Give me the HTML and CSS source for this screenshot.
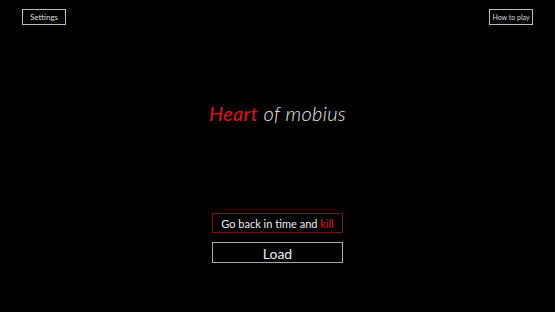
FILE: index.html
```html
<html>
<head>
  <link rel="stylesheet" href="styles.css">
</head>
<body>

<div class="screen">
  <div class="top-bar">
    <button class="small-btn">Settings</button>
    <button class="small-btn small-btn-help">How to play</button>
  </div>

  <h1 class="title"><span class="title-red">Heart</span> of mobius</h1>

  <div class="menu">
    <button class="menu-btn menu-btn-start">Go back in time and <span class="kill">kill</span></button>
    <button class="menu-btn menu-btn-load">Load</button>
  </div>
</div>

</body>
</html>
```

FILE: styles.css
```css
body {
  margin: 0;
  background-color: #000;
  font-family: "Lato", "Noto Sans", sans-serif;
  color: #eee;
}

.screen {
  width: 555px;
  height: 312px;
  display: flex;
  flex-direction: column;
  align-items: center;
}

.top-bar {
  width: 100%;
  box-sizing: border-box;
  display: flex;
  justify-content: space-between;
  padding: 9px 22px 0 22px;
}

.small-btn {
  width: 44px;
  height: 16px;
  padding: 0;
  background: #000;
  color: #ddd;
  border: 1px solid #bbb;
  font-family: "Lato", "Noto Sans", sans-serif;
  font-size: 8px;
  line-height: 14px;
}

.small-btn-help {
  font-size: 7px;
}

.title {
  margin: 75px 0 0 0;
  font-size: 20px;
  font-weight: 300;
  font-style: italic;
  line-height: 26px;
  color: #eee;
  letter-spacing: 0.3px;
}

.title-red {
  color: #e0161c;
  font-weight: 400;
}

.menu {
  margin-top: 87px;
  display: flex;
  flex-direction: column;
  gap: 9px;
}

.menu-btn {
  width: 131px;
  background: #000;
  color: #eee;
  font-family: "Lato", "Noto Sans", sans-serif;
}

.menu-btn-start {
  height: 20px;
  border: 1px solid #7a1416;
  font-size: 11px;
  line-height: 18px;
}

.kill {
  color: #e0161c;
}

.menu-btn-load {
  height: 21px;
  border: 1px solid #aaa;
  font-size: 14px;
  line-height: 19px;
}
```
